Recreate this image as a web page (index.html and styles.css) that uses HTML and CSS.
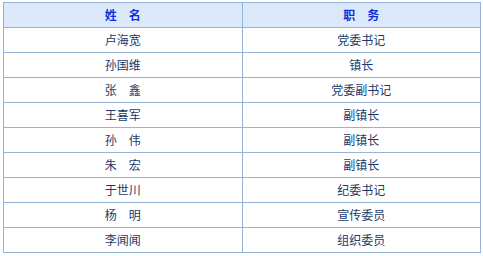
FILE: index.html
```html
<!DOCTYPE html>
<html>
<head>
<meta charset="utf-8">
<link rel="stylesheet" href="styles.css">
</head>
<body>
<table class="staff">
  <thead>
    <tr><th>姓　名</th><th>职　务</th></tr>
  </thead>
  <tbody>
    <tr><td>卢海宽</td><td>党委书记</td></tr>
    <tr><td>孙国维</td><td>镇长</td></tr>
    <tr><td>张　鑫</td><td>党委副书记</td></tr>
    <tr><td>王喜军</td><td>副镇长</td></tr>
    <tr><td>孙　伟</td><td>副镇长</td></tr>
    <tr><td>朱　宏</td><td>副镇长</td></tr>
    <tr><td>于世川</td><td>纪委书记</td></tr>
    <tr><td>杨　明</td><td>宣传委员</td></tr>
    <tr><td>李闻闻</td><td>组织委员</td></tr>
  </tbody>
</table>
</body>
</html>
```
FILE: styles.css
```css
html, body {
  margin: 0;
  background: #ffffff;
}
body {
  padding: 2px 0 0 3px;
  font-family: "Noto Sans CJK SC", "Noto Sans", sans-serif;
  font-size: 12px;
}
.staff {
  border-collapse: collapse;
  width: 478px;
  table-layout: fixed;
}
.staff th, .staff td {
  border: 1px solid #95b3d7;
  height: 24px;
  padding: 0;
  text-align: center;
  vertical-align: middle;
  line-height: 24px;
  box-sizing: border-box;
  height: 25px;
}
.staff th {
  background: #dbe9fa;
  color: #1030e0;
  font-weight: bold;
}
.staff td {
  color: #1a3a6a;
}
```
